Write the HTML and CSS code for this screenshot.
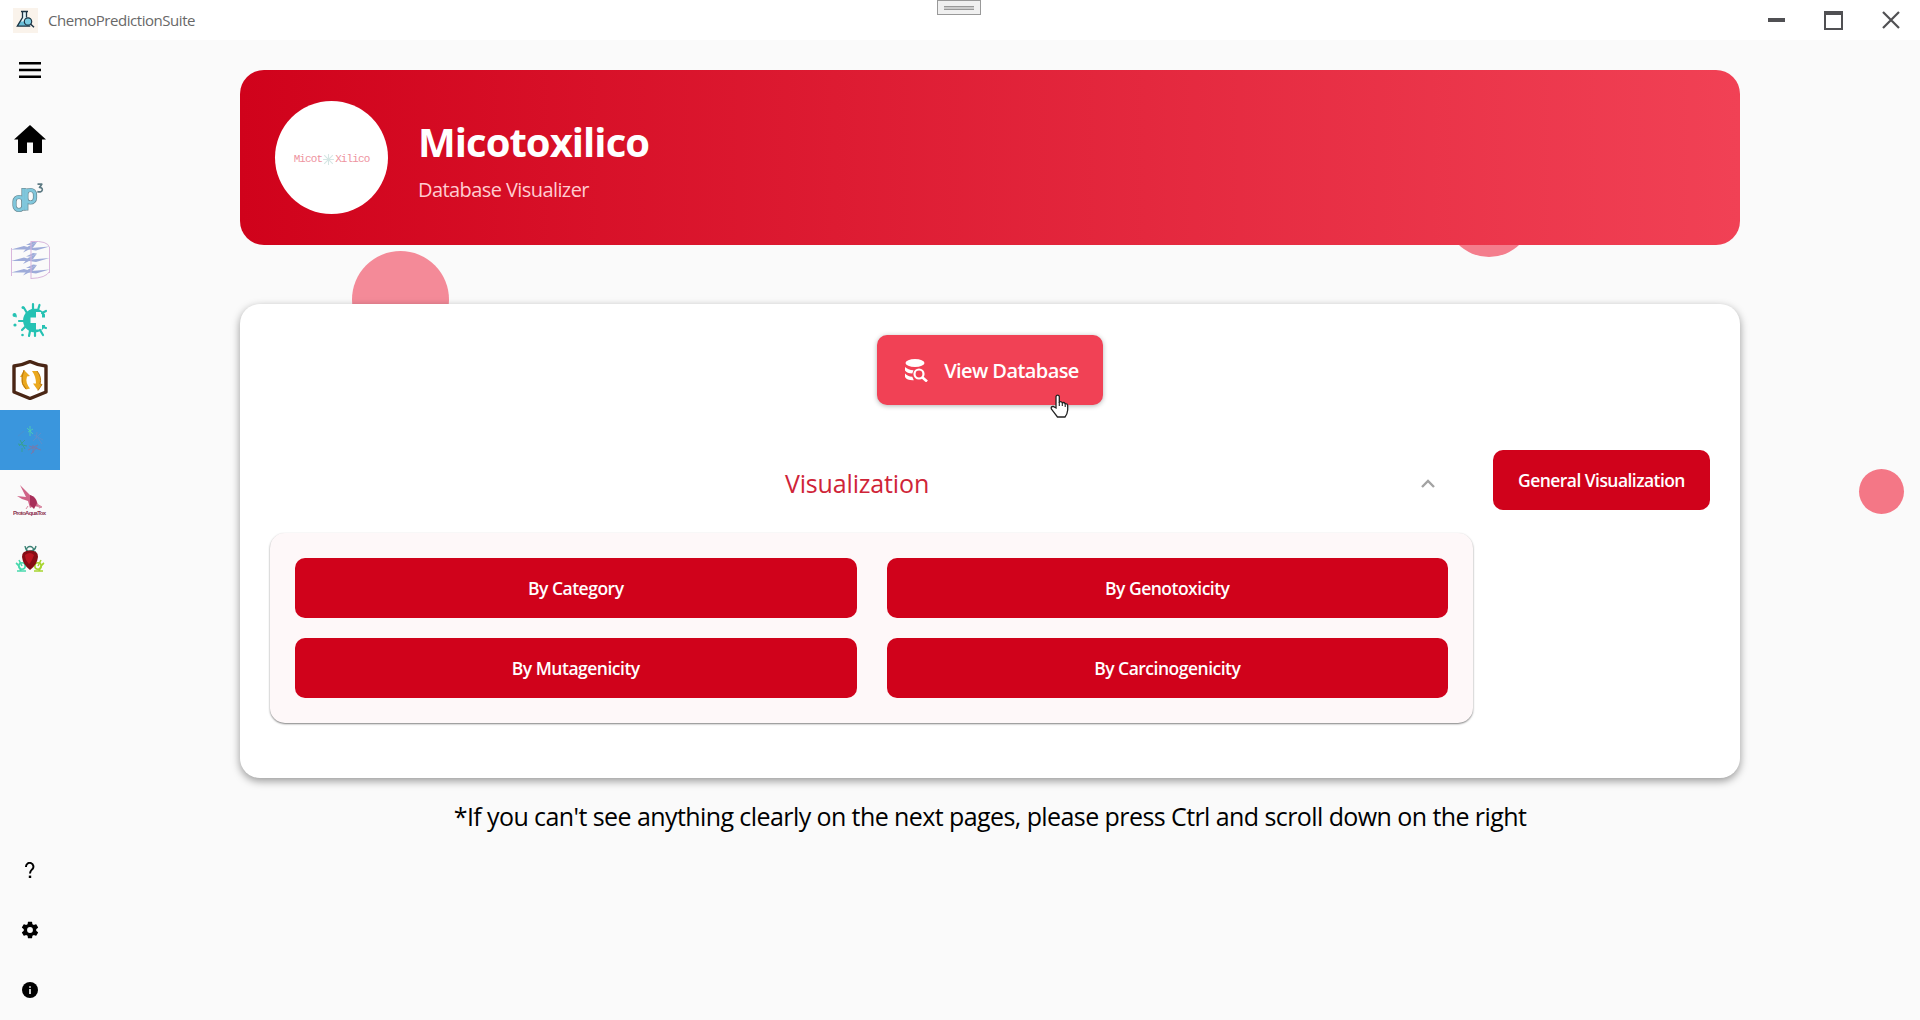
FILE: index.html
```
<!DOCTYPE html>
<html lang="en">
<head>
<meta charset="utf-8">
<title>ChemoPredictionSuite</title>
<link rel="stylesheet" href="styles.css">
</head>
<body>
<header class="titlebar">
  <svg class="app-icon" viewBox="0 0 25 25"><rect width="25" height="25" fill="#faf3eb"/><path d="M9.500 3.500v6L4.500 18h9l2-7-2-2V3.500z" fill="#e4f4f8"/><path d="M6.500 13.500h6.500l4 4.500H4z" fill="#69bdd6"/><path d="M8 3.500h7M9.500 3.500v6L4.300 18.200h13M13.500 3.500v6" fill="none" stroke="#1d3444" stroke-width="1.300"/><circle cx="15" cy="13.500" r="3.700" fill="#7ccbe0" stroke="#1d3444" stroke-width="1.200"/><path d="M17.500 16l3.500 3.200" stroke="#1d3444" stroke-width="1.500"/></svg>
  <span class="app-name">ChemoPredictionSuite</span>
  <div class="grip"><i></i></div>
  <div class="window-controls">
    <svg width="17" height="4" viewBox="0 0 17 4"><path d="M0 0h17v4H0z" fill="#505053"/></svg>
    <svg width="19" height="19" viewBox="0 0 19 19"><path d="M0 0h19v19H0zM2 4v13h15V4z" fill="#505053" fill-rule="evenodd"/></svg>
    <svg width="18" height="18" viewBox="0 0 18 18"><path d="M1 1l16 16M17 1L1 17" stroke="#505053" stroke-width="2.200"/></svg>
  </div>
</header>
<div class="shell">
  <nav class="sidebar">
    <div class="item menu"><svg width="22" height="16" viewBox="0 0 22 16"><path d="M0 0h22v2.400H0zM0 6.800h22v2.400H0zM0 13.600h22V16H0z"/></svg></div>
    <div class="item home"><svg width="32" height="28" viewBox="0 0 32 28"><path d="M16 0l16 14.500h-4V28h-9V17.500h-6V28H4V14.500H0z"/></svg></div>
    <div class="item dp"><svg width="32" height="30" viewBox="0 0 32 30"><g fill="none" stroke-linejoin="round"><g id="dp" stroke="#668791" stroke-width="4.200"><rect x="2.500" y="14" width="9" height="13" rx="4.500"/><path d="M11.500 5v22.500"/><rect x="14" y="7" width="9" height="12.500" rx="4.500"/><path d="M14.300 5.500v22"/></g><g stroke="#80c7dc" stroke-width="2.800"><rect x="2.500" y="14" width="9" height="13" rx="4.500"/><path d="M11.500 5.600v21.300"/><rect x="14" y="7" width="9" height="12.500" rx="4.500"/><path d="M14.300 6v20.900"/></g><path d="M25.500 1.200h4.300l-2.300 3.200q2.900.1 2.800 2.500-.5 2.800-5 1.700" stroke="#5d7a83" stroke-width="1.700"/></g></svg></div>
    <div class="item"><svg width="40" height="40" viewBox="0 0 40 40"><g fill="#9eabd9"><g id="sheet"><path d="M1 9.500L14 6l7 2L39.500 6.500 26 10.500 19 9.500z"/><path d="M13 12.500l5-6 9-4.500-4 5.500z"/><path d="M16 5l7-3.500 4 .5-6 3z"/></g><use href="#sheet" y="11.500"/><use href="#sheet" y="23"/></g><path d="M1.500 8v28M21 1v38M39.500 7v26M21 1.500q17-1 18.500 6M21 38.500q15-.5 18.500-7" fill="none" stroke="#d9b6dc" stroke-width="1"/></svg></div>
    <div class="item"><svg width="36" height="38" viewBox="0 0 36 38"><g fill="none" stroke="#25c2b3" stroke-width="2.200" stroke-linecap="round"><path d="M21 9V3M26 9l1.500-5M30 12l4-2M15 12l-3-5M12 20H7M13 26l-3 3M18 30l-1 5M23 30v5M28 29l3 5M31 26l3 1"/></g><path d="M33 13.500A11.800 11.800 0 1 0 33 25.500V24h-3v4.500h-6V22h-5.500v-5.500H24V11h6v5.500h3z" fill="#25c2b3"/><g fill="#25c2b3"><circle cx="2.500" cy="14" r="2"/><path d="M2 12l3 3-1 2z"/><circle cx="3" cy="24" r="1.600"/><circle cx="10.500" cy="34" r="1.300"/><circle cx="11" cy="6.500" r="1.500"/></g></svg></div>
    <div class="item"><svg width="36" height="40" viewBox="0 0 36 40"><path d="M2 6q9-1 16-4.500Q25 5 34 6v26l-16 6.500L2 32z" fill="#fff" stroke="#4a2615" stroke-width="3.400" stroke-linejoin="round"/><path d="M8 17l4-7 6 6-3 .5q-2 6 3 12l-4 1q-6-5-4-12.500z" fill="#eba91f"/><path d="M20 11h5q5 6 3 13l2 .5-4 6-5-7h3q0-7-4-12.500z" fill="#eba91f"/><path d="M25 11q5 6 3 13l2 .5-4 6M12 10l-2 7q-1 7 4 12" fill="none" stroke="#b97712" stroke-width="1"/></svg></div>
    <div class="item active"><svg width="28" height="30" viewBox="0 0 28 30" fill="none" stroke-width="1"><path d="M14 1v10M11 3l6 6M17 4l-5 3" stroke="#4bc7b5"/><path d="M4 15l5 9M9 15l-6 6M2 19l9 2M6 23v4" stroke="#37a095"/><path d="M21 7l-1 7M18 10l9 5M25 8l-8 8M22 13l4 6" stroke="#5a8fce"/><path d="M12 25l10-5M17 20v8M13 21l12 4M21 22l-6 7" stroke="#7979aa"/><path d="M2 11l6-5" stroke="#4b90cf"/></svg></div>
    <div class="item"><svg width="34" height="34" viewBox="0 0 34 34"><path d="M4 13l9 1L7 2l10 10q6 2 7 7l2 5-5-1-4 2-2-7-6-2z" fill="#cf6487"/><path d="M17 12q6 2 7 8l-3 6-4-4z" fill="#a72e59"/><path d="M24 21l5 3-3 1M15 23l-2 3" fill="#d98aa3" stroke="#d98aa3"/><text x="0" y="32" textLength="33" class="aqua">ProtoAquaTox</text></svg></div>
    <div class="item tox"><svg width="30" height="30" viewBox="0 0 30 30"><g fill="none" stroke="#3c8275" stroke-width="1.400"><circle cx="15" cy="6" r="3.500"/><path d="M10 2q1 6 5 5 5 0 6-5M9 9l12-1"/></g><g fill="none" stroke="#48d9ad" stroke-width="1.600"><circle cx="7" cy="22" r="3.200"/><path d="M1 19q3 2 5 8M2 27h9M4 16l3 6"/></g><g fill="none" stroke="#a7d52f" stroke-width="1.600"><circle cx="23" cy="22" r="3.200"/><path d="M29 19q-3 2-5 8M28 27h-9M26 16l-3 6"/></g><path d="M15 6.500q8.500 0 8 6.500-1 8-8 13-7-5-8-13-.5-6.500 8-6.500z" fill="#860d15"/><path d="M10 11q5-4 9 0-3 8-5 9-4-4-4-9z" fill="#b91420"/></svg></div>
    <div class="spacer"></div>
    <div class="item"><svg width="10" height="16" viewBox="0 0 10 16"><path d="M1 5V4.500A3.700 3.700 0 1 1 7.500 7C6 8.500 5 9 5 11.500" fill="none" stroke="#000" stroke-width="2"/><path d="M3.800 13.600h2.400V16H3.800z"/></svg></div>
    <div class="item"><svg width="20" height="20" viewBox="0 0 24 24"><path d="M12 15.500A3.500 3.500 0 0 1 8.500 12 3.500 3.500 0 0 1 12 8.500a3.500 3.500 0 0 1 3.500 3.500 3.500 3.500 0 0 1-3.500 3.500m7.430-2.530c.04-.32.07-.64.07-.97s-.03-.66-.07-1l2.110-1.630c.19-.15.24-.42.12-.64l-2-3.460c-.12-.22-.39-.31-.61-.22l-2.490 1c-.52-.39-1.060-.73-1.690-.98l-.37-2.650A.506.506 0 0 0 14 2h-4c-.25 0-.46.18-.5.42l-.37 2.650c-.63.25-1.170.59-1.690.98l-2.490-1c-.22-.09-.49 0-.61.22l-2 3.460c-.13.22-.07.49.12.64L4.570 11c-.04.34-.07.67-.07 1s.03.65.07.970l-2.110 1.660c-.19.15-.25.42-.12.64l2 3.460c.12.22.39.300.61.220l2.490-1.010c.52.400 1.060.740 1.690.990l.37 2.650c.04.240.25.420.5.420h4c.25 0 .46-.18.5-.42l.37-2.650c.63-.26 1.170-.59 1.690-.99l2.490 1.010c.22.080.49 0 .61-.22l2-3.460c.12-.22.07-.49-.12-.64z"/></svg></div>
    <div class="item"><svg width="16" height="16" viewBox="0 0 16 16"><circle cx="8" cy="8" r="8"/><path d="M7.200 4.200h1.600v1.500H7.200zM7.200 7h1.600v5H7.200z" fill="#fff"/></svg></div>
  </nav>
  <main class="content">
    <span class="bubble bubble-left"></span><span class="bubble bubble-top"></span><span class="bubble bubble-right"></span>
    <section class="hero">
      <div class="logo"><span>Micot</span><svg width="13" height="13" viewBox="0 0 12 12"><path d="M6 1v10M1 6h10M2 2l8 8M10 2l-8 8" stroke="#d5e6e4" stroke-width="1"/></svg><span>Xilico</span></div>
      <div class="hero-text"><h1>Micotoxilico</h1><p>Database Visualizer</p></div>
    </section>
    <section class="card">
      <button class="primary"><svg width="23" height="23" viewBox="0 0 23 23"><g fill="#fff"><ellipse cx="10" cy="4" rx="9.500" ry="4"/><path d="M0 8q3 3 8.500 3.200l-1.200 3.300Q2 14.500 0 11.500zM0 14.500q2.500 3 7.300 3.300l1.500 3.400Q2 21.500 0 18z"/><path d="M17.500 18.500l4.500 4" stroke="#fff" stroke-width="2.600"/></g><circle cx="14" cy="15" r="4.500" fill="none" stroke="#fff" stroke-width="2.200"/></svg><span>View Database</span></button>
      <div class="row">
        <div class="expander">
          <div class="expander-head"><span class="expander-title">Visualization</span><svg width="14" height="9" viewBox="0 0 14 9"><path d="M1 8l6-6 6 6" fill="none" stroke="#a3a3a3" stroke-width="2.400"/></svg></div>
          <div class="panel">
            <button class="action">By Category</button><button class="action">By Genotoxicity</button>
            <button class="action">By Mutagenicity</button><button class="action">By Carcinogenicity</button>
          </div>
        </div>
        <button class="action general">General Visualization</button>
      </div>
    </section>
    <p class="note">*If you can't see anything clearly on the next pages, please press Ctrl and scroll down on the right</p>
  </main>
</div>
<svg class="cursor" width="19" height="24" viewBox="0 0 19 24"><path d="M6 14V2.500a1.700 1.700 0 0 1 3.300 0V8q2-1 3 .8 2-.8 2.700.8 2.500-.4 2.700 2V16q-.3 4-2.700 7H7.500Q4.500 19 1.300 14.800q-.6-2.500 2-2.300z" fill="#fff" stroke="#222" stroke-width="1.300"/><path d="M9.300 8v4M12.300 9v3M15.200 10v3" stroke="#222" stroke-width="1.100"/></svg>
</body>
</html>
```
FILE: styles.css
```
* { box-sizing: border-box; }
body { margin: 0; width: 1920px; height: 1020px; overflow: hidden; background: #fafafa; color: #000; font-family: "Open Sans", "Noto Sans", sans-serif; }
svg { display: block; flex: none; }
button { border: 0; font: inherit; color: #fff; display: flex; align-items: center; justify-content: center; white-space: nowrap; }
.titlebar { position: relative; height: 40px; background: #fff; display: flex; align-items: center; padding: 0 20px 0 13px; }
.app-icon { width: 25px; height: 25px; }
.app-name { margin-left: 10px; font-size: 15px; letter-spacing: -.45px; color: #686868; }
.grip { position: absolute; left: 937px; top: 0; width: 44px; height: 15px; border: 1px solid #999; background: #f0f0f0; padding: 5px 6px; }
.grip i { display: block; height: 4px; background: #ccc; border: solid #999; border-width: 1px 0; }
.window-controls { margin-left: auto; display: flex; align-items: center; gap: 39px; }
.shell { display: flex; height: 980px; }
.sidebar { width: 60px; display: flex; flex-direction: column; }
.item { height: 60px; display: flex; align-items: center; justify-content: center; flex: none; }
.menu { margin-bottom: 10px; }
.home, .tox { padding-bottom: 2px; }
.dp { padding: 0 4px 5px 0; }
.active { background: #3a96dd; }
.spacer { flex: 1; }
.aqua { font: 700 6px "Liberation Sans", sans-serif; fill: #8c3351; }
.content { position: relative; flex: 1; padding: 30px 180px 0; }
.bubble { position: absolute; border-radius: 50%; }
.bubble-left { left: 292px; top: 211px; width: 97px; height: 97px; background: #f48a98; }
.bubble-top { left: 1385px; top: 129px; width: 88px; height: 88px; background: #f47d8c; }
.bubble-right { left: 1799px; top: 429px; width: 45px; height: 45px; background: #f47786; }
.hero { position: relative; height: 175px; border-radius: 24px; background: linear-gradient(90deg, #d0021b, #f14155); display: flex; align-items: center; padding-left: 35px; }
.logo { width: 113px; height: 113px; border-radius: 50%; background: #fff; display: flex; align-items: center; justify-content: center; padding-top: 3px; color: #ee93a0; font: 11px "Liberation Mono", monospace; letter-spacing: -.9px; }
.hero-text { margin-left: 30px; padding-top: 4px; color: #fff; }
.hero h1 { margin: 0; font-size: 40px; line-height: 54px; font-weight: 700; letter-spacing: -.95px; }
.hero p { margin: 7px 0 0; font-size: 20px; line-height: 28px; letter-spacing: -.58px; color: #ffccd1; }
.card { position: relative; margin-top: 59px; height: 474px; border-radius: 20px; background: #fff; box-shadow: 0 3px 8px rgba(0,0,0,.4); padding: 31px 30px 0; }
.primary { margin: 0 auto; width: 226px; height: 70px; border-radius: 10px; background: #f14155; gap: 16px; padding: 0 0 0 4px; font-size: 20px; font-weight: 600; letter-spacing: -.58px; box-shadow: 0 1px 5px rgba(0,0,0,.3); }
.row { display: flex; align-items: flex-start; gap: 20px; margin-top: 45px; }
.expander { width: 1203px; }
.expander-head { height: 83px; display: flex; align-items: center; padding: 0 38px 17px 23px; }
.expander-title { flex: 1; text-align: center; color: #cf2438; font-size: 25px; font-weight: 500; letter-spacing: -.15px; }
.panel { height: 190px; border-radius: 15px; background: #fef8f9; box-shadow: 0 1px 2px rgba(0,0,0,.5); padding: 25px; display: grid; grid-template-columns: 1fr 1fr; gap: 20px 30px; }
.action { height: 60px; padding: 0; border-radius: 10px; background: #d0021b; font-size: 17.5px; font-weight: 600; letter-spacing: -.5px; }
.general { width: 217px; letter-spacing: -.56px; }
.note { margin: 20px 0 0; text-align: center; font-size: 25px; line-height: 36px; letter-spacing: -.58px; }
.cursor { position: absolute; left: 1050px; top: 394px; }
```
